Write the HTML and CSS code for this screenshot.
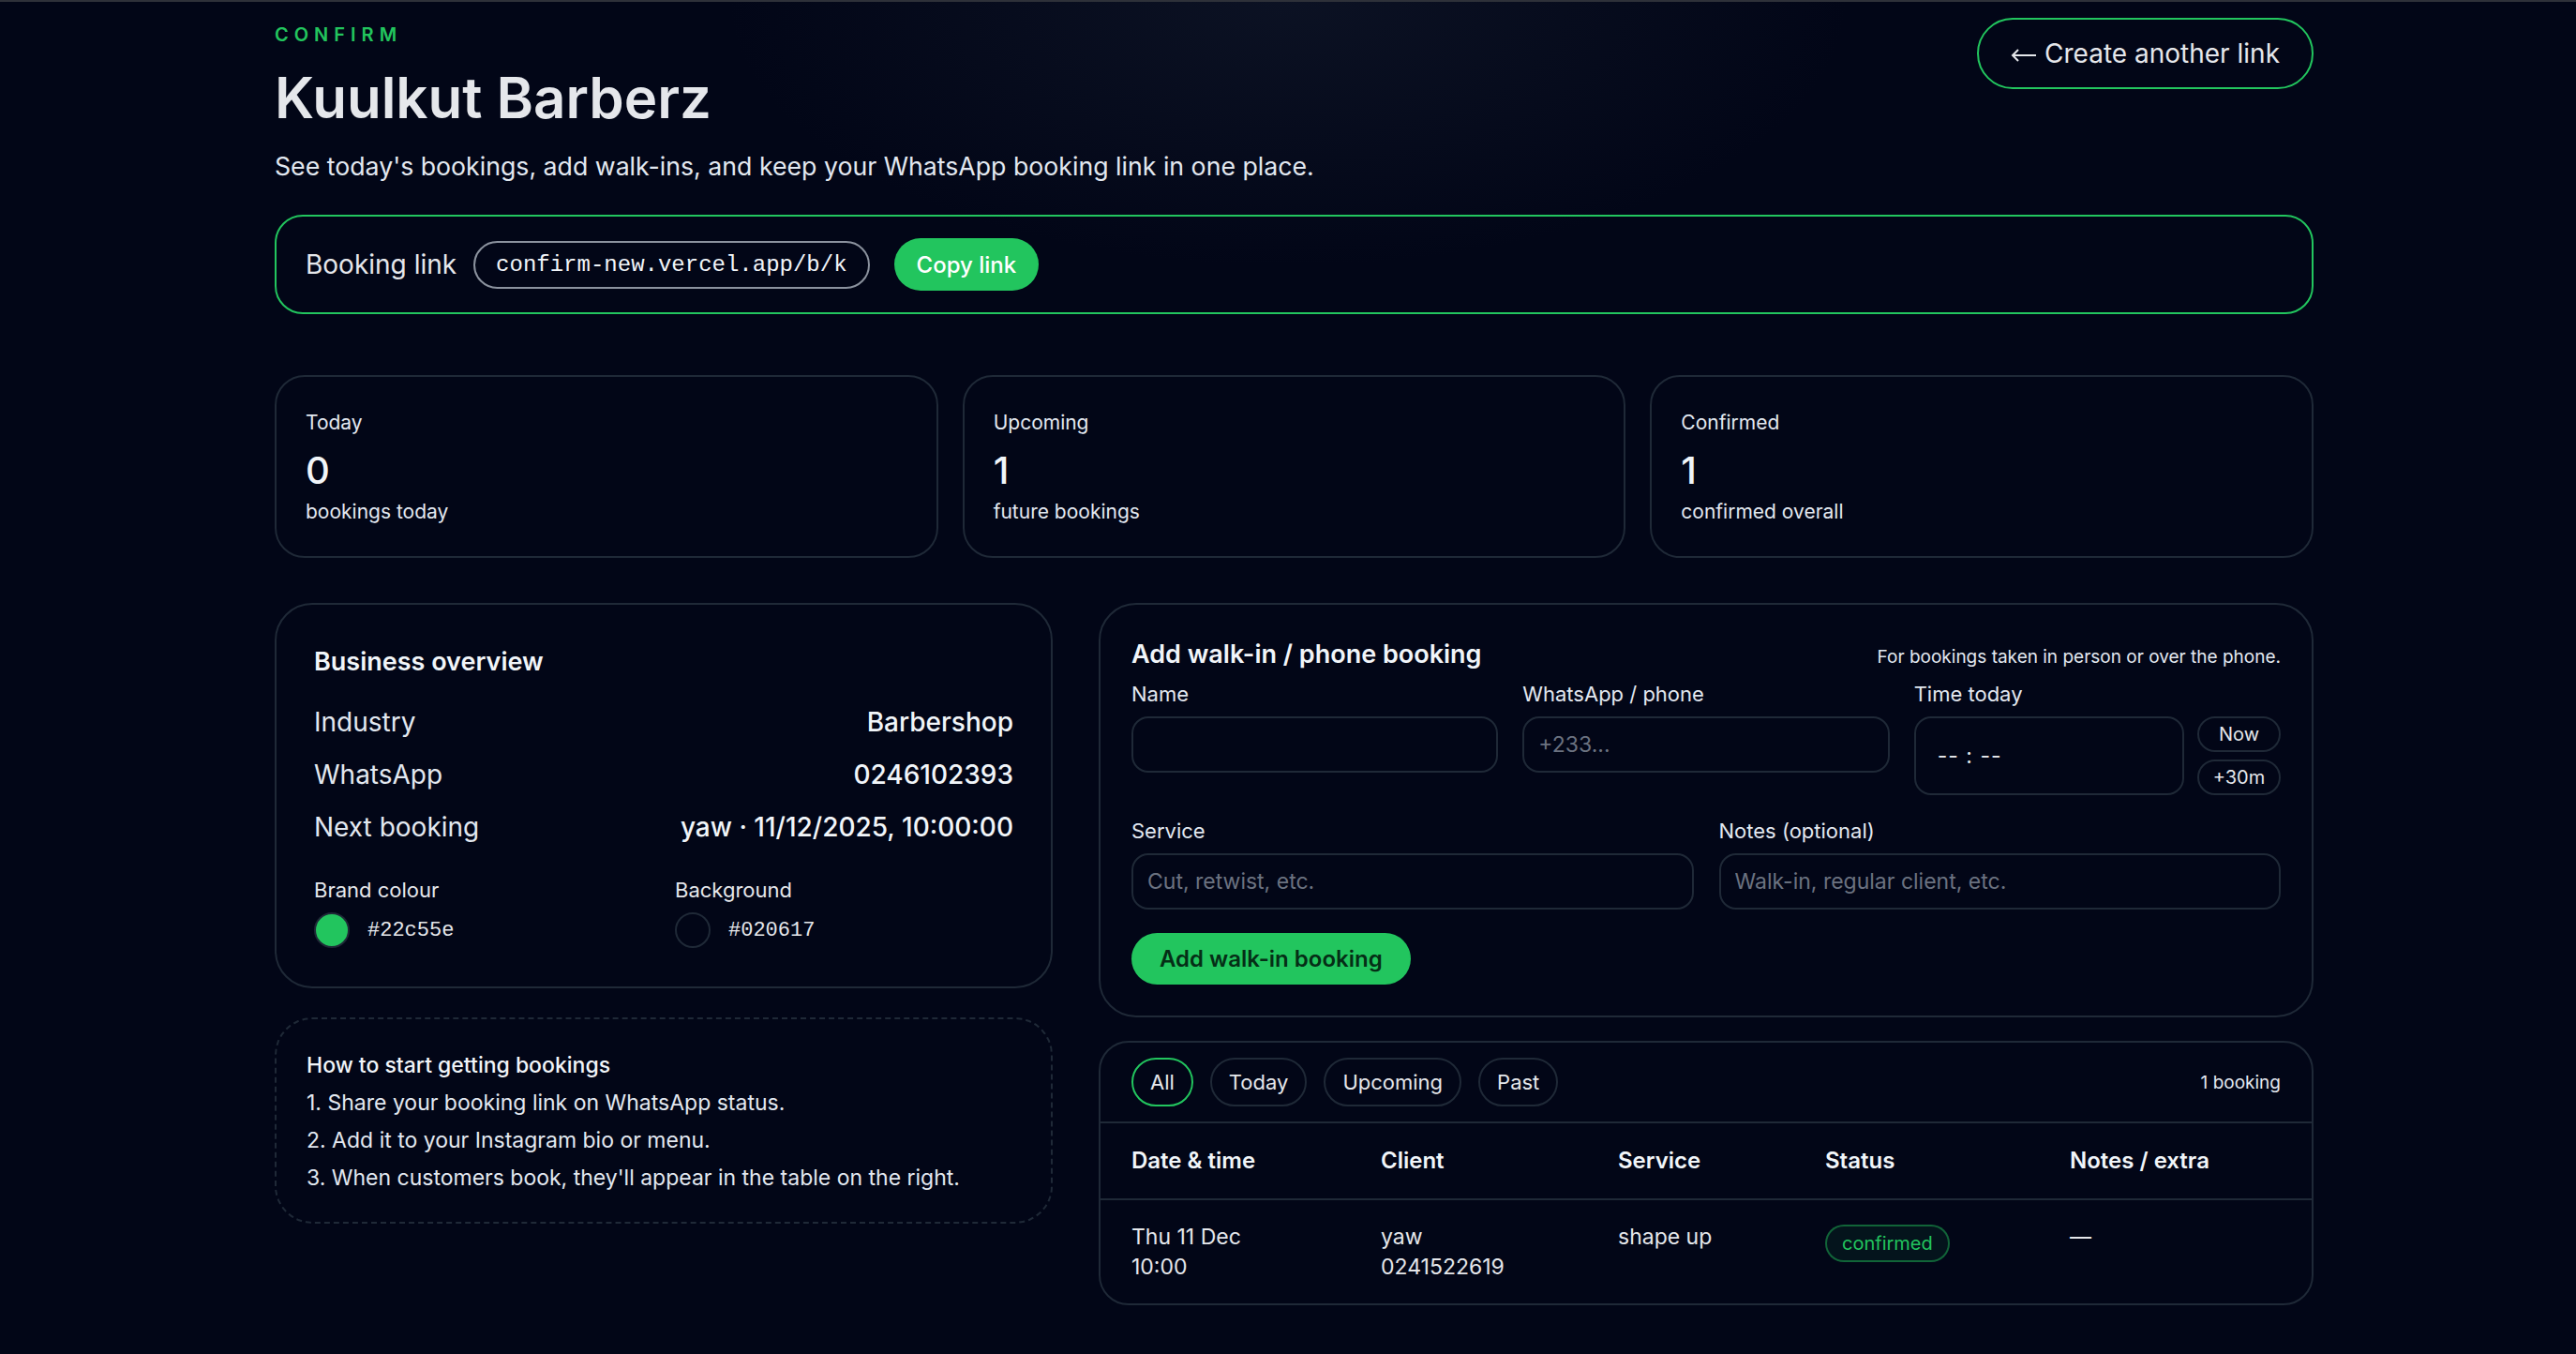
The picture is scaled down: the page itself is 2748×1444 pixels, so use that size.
FILE: index.html
```html
<!DOCTYPE html>
<html>

<head>
  <title>Confirm - Kuulkut Barberz</title>
  <link rel="stylesheet" href="styles.css">
</head>

<body>
  <main class="page">
    <header class="top">
      <div>
        <p class="brand">CONFIRM</p>
        <h1>Kuulkut Barberz</h1>
        <p class="lead">See today's bookings, add walk-ins, and keep your WhatsApp booking link in one place.</p>
      </div>
      <a class="ghost-btn" href="#">
        <svg class="arrow" width="28" height="16" viewBox="0 0 28 16" fill="none" stroke="currentColor" stroke-width="2">
          <path d="M27 8H2M8 2L2 8l6 6" />
        </svg>
        Create another link
      </a>
    </header>

    <section class="link-card">
      <span class="link-label">Booking link</span>
      <code class="link-pill">confirm-new.vercel.app/b/k</code>
      <button class="copy-btn">Copy link</button>
    </section>

    <section class="stats">
      <div class="stat">
        <p class="stat-label">Today</p>
        <p class="stat-num">0</p>
        <p class="stat-sub">bookings today</p>
      </div>
      <div class="stat">
        <p class="stat-label">Upcoming</p>
        <p class="stat-num">1</p>
        <p class="stat-sub">future bookings</p>
      </div>
      <div class="stat">
        <p class="stat-label">Confirmed</p>
        <p class="stat-num">1</p>
        <p class="stat-sub">confirmed overall</p>
      </div>
    </section>

    <section class="main-grid">
      <div class="col col-left">
        <div class="card overview">
          <h2 class="card-title">Business overview</h2>
          <div class="rows">
            <div class="row"><span>Industry</span><span class="val">Barbershop</span></div>
            <div class="row"><span>WhatsApp</span><span class="val">0246102393</span></div>
            <div class="row"><span>Next booking</span><span class="val">yaw · 11/12/2025, 10:00:00</span></div>
          </div>
          <div class="swatches">
            <div>
              <p class="sw-label">Brand colour</p>
              <div class="sw-row"><span class="dot dot-brand"></span><code class="hex">#22c55e</code></div>
            </div>
            <div>
              <p class="sw-label">Background</p>
              <div class="sw-row"><span class="dot dot-bg"></span><code class="hex">#020617</code></div>
            </div>
          </div>
        </div>

        <div class="tips">
          <p class="tips-title">How to start getting bookings</p>
          <p>1. Share your booking link on WhatsApp status.</p>
          <p>2. Add it to your Instagram bio or menu.</p>
          <p>3. When customers book, they'll appear in the table on the right.</p>
        </div>
      </div>

      <div class="col col-right">
        <form class="card walkin" action="" method="get">
          <div class="walk-head">
            <h2 class="card-title">Add walk-in / phone booking</h2>
            <span class="note">For bookings taken in person or over the phone.</span>
          </div>
          <div class="form-row three">
            <label class="field">
              <span class="field-label">Name</span>
              <input class="input" type="text" name="name">
            </label>
            <label class="field">
              <span class="field-label">WhatsApp / phone</span>
              <input class="input" type="text" name="phone" placeholder="+233...">
            </label>
            <div class="field">
              <span class="field-label">Time today</span>
              <div class="time-wrap">
                <div class="input time-box">-- : --</div>
                <div class="time-btns">
                  <button type="button" class="mini-btn">Now</button>
                  <button type="button" class="mini-btn">+30m</button>
                </div>
              </div>
            </div>
          </div>
          <div class="form-row two">
            <label class="field">
              <span class="field-label">Service</span>
              <input class="input" type="text" name="service" placeholder="Cut, retwist, etc.">
            </label>
            <label class="field">
              <span class="field-label">Notes (optional)</span>
              <input class="input" type="text" name="notes" placeholder="Walk-in, regular client, etc.">
            </label>
          </div>
          <button type="submit" class="add-btn">Add walk-in booking</button>
        </form>

        <div class="card bookings">
          <div class="filter-bar">
            <div class="filters">
              <button class="pill active">All</button>
              <button class="pill">Today</button>
              <button class="pill">Upcoming</button>
              <button class="pill">Past</button>
            </div>
            <span class="count">1 booking</span>
          </div>
          <table class="table">
            <colgroup>
              <col style="width: 299px">
              <col style="width: 253px">
              <col style="width: 221px">
              <col style="width: 261px">
              <col>
            </colgroup>
            <thead>
              <tr>
                <th>Date &amp; time</th>
                <th>Client</th>
                <th>Service</th>
                <th>Status</th>
                <th>Notes / extra</th>
              </tr>
            </thead>
            <tbody>
              <tr>
                <td>Thu 11 Dec<br>10:00</td>
                <td>yaw<br>0241522619</td>
                <td>shape up</td>
                <td><span class="badge">confirmed</span></td>
                <td>—</td>
              </tr>
            </tbody>
          </table>
        </div>
      </div>
    </section>
  </main>
</body>

</html>
```

FILE: styles.css
```css
body {
  margin: 0;
  min-height: 1442px;
  border-top: 2px solid #2e3139;
  font-family: Inter, "Noto Sans", sans-serif;
  color: #e5e7eb;
  background: radial-gradient(ellipse 800px 380px at 50% 0%, rgba(51, 65, 85, 0.2), transparent 75%), #020617;
}

p {
  margin: 0;
}

.page {
  padding: 17px 280px 40px 293px;
}

.top {
  display: flex;
  justify-content: space-between;
  align-items: flex-start;
}

.brand {
  margin-top: 4px;
  font-size: 20px;
  line-height: 28px;
  letter-spacing: 6px;
  font-weight: 600;
  color: #22c55e;
}

h1 {
  margin: 17px 0 0;
  font-size: 60px;
  line-height: 72px;
  font-weight: 600;
  color: #e5e7eb;
}

.lead {
  margin-top: 19px;
  font-size: 26.7px;
  line-height: 36px;
  color: #e2e8f0;
}

.ghost-btn {
  display: flex;
  align-items: center;
  gap: 8px;
  height: 76px;
  box-sizing: border-box;
  padding: 0 34px;
  border: 2px solid #22c55e;
  border-radius: 999px;
  font-size: 28px;
  color: #e5e7eb;
  text-decoration: none;
}

.arrow {
  margin-top: 3px;
}

/* booking link */
.link-card {
  display: flex;
  align-items: center;
  gap: 18px;
  margin-top: 34px;
  height: 106px;
  box-sizing: border-box;
  padding: 0 31px;
  border: 2px solid #22c55e;
  border-radius: 30px;
}

.link-label {
  font-size: 28px;
}

.link-pill {
  display: flex;
  align-items: center;
  height: 51px;
  box-sizing: border-box;
  padding: 0 22px;
  border: 2px solid #8b929e;
  border-radius: 999px;
  font-family: "Liberation Mono", "DejaVu Sans Mono", monospace;
  font-size: 24px;
  color: #f1f5f9;
}

.copy-btn {
  margin-left: 8px;
  height: 56px;
  padding: 0 24px;
  border: 0;
  border-radius: 999px;
  background: #22c55e;
  color: #fff;
  font-family: inherit;
  font-size: 24px;
  font-weight: 500;
}

/* stats */
.stats {
  display: grid;
  grid-template-columns: repeat(3, 1fr);
  gap: 26px;
  margin-top: 65px;
}

.stat {
  height: 195px;
  box-sizing: border-box;
  padding: 34px 31px 31px;
  border: 2px solid #1f2937;
  border-radius: 32px;
}

.stat-label,
.stat-sub {
  font-size: 21px;
  line-height: 30px;
  color: #e2e8f0;
}

.stat-num {
  margin: 12px 0 5px;
  font-size: 40px;
  line-height: 48px;
  font-weight: 500;
  color: #f1f5f9;
}

/* lower grid */
.main-grid {
  display: grid;
  grid-template-columns: 830px minmax(0, 1fr);
  gap: 49px;
  align-items: start;
  margin-top: 48px;
}

.col {
  display: flex;
  flex-direction: column;
}

.col-left {
  gap: 31px;
}

.col-right {
  gap: 25px;
}

.card {
  border: 2px solid #1f2937;
  border-radius: 40px;
}

.card-title {
  margin: 0;
  font-size: 27px;
  line-height: 36px;
  font-weight: 600;
  color: #f1f5f9;
}

.overview {
  padding: 43px 40px 41px;
}

.rows {
  display: flex;
  flex-direction: column;
  gap: 16px;
  margin-top: 26px;
}

.row {
  display: flex;
  justify-content: space-between;
  font-size: 28px;
  line-height: 40px;
  color: #e2e8f0;
}

.row .val {
  font-weight: 500;
  color: #f1f5f9;
}

.swatches {
  display: grid;
  grid-template-columns: 1fr 1fr;
  gap: 24px;
  margin-top: 32px;
}

.sw-label {
  font-size: 22px;
  line-height: 30px;
}

.sw-row {
  display: flex;
  align-items: center;
  gap: 19px;
  margin-top: 9px;
}

.dot {
  width: 38px;
  height: 38px;
  box-sizing: border-box;
  border: 2px solid #1f2937;
  border-radius: 50%;
}

.dot-brand {
  background: #22c55e;
}

.dot-bg {
  background: #020617;
}

.hex {
  font-family: "Liberation Mono", "DejaVu Sans Mono", monospace;
  font-size: 22px;
  color: #e5e7eb;
}

.tips {
  padding: 29px 32px 27px;
  border: 2px dashed #1f2937;
  border-radius: 40px;
  font-size: 23px;
  line-height: 40px;
  color: #e2e8f0;
}

.tips-title {
  font-weight: 500;
  color: #f1f5f9;
}

/* walk-in form */
.walkin {
  margin: 0;
  padding: 35px 33px 33px;
}

.walk-head {
  display: flex;
  justify-content: space-between;
  align-items: baseline;
}

.note {
  font-size: 19px;
  color: #e2e8f0;
}

.form-row {
  display: grid;
  align-items: start;
}

.form-row.three {
  grid-template-columns: repeat(3, minmax(0, 1fr));
  gap: 26px;
  margin-top: 9px;
}

.form-row.two {
  grid-template-columns: repeat(2, minmax(0, 1fr));
  gap: 27px;
  margin-top: 23px;
}

.field {
  display: flex;
  flex-direction: column;
  min-width: 0;
}

.field-label {
  margin-bottom: 9px;
  font-size: 22px;
  line-height: 30px;
  color: #e2e8f0;
}

.input {
  width: 100%;
  min-width: 0;
  height: 60px;
  box-sizing: border-box;
  padding: 0 15px;
  border: 2px solid #1f2937;
  border-radius: 18px;
  background: transparent;
  color: #e5e7eb;
  font-family: inherit;
  font-size: 23px;
  outline: none;
}

.input::placeholder {
  color: #6b7280;
}

.time-wrap {
  display: flex;
  gap: 14px;
}

.time-box {
  flex: 1;
  height: 84px;
  display: flex;
  align-items: center;
  padding: 0 23px;
  letter-spacing: 1px;
}

.time-btns {
  display: flex;
  flex-direction: column;
  gap: 8px;
}

.mini-btn {
  width: 89px;
  height: 38px;
  border: 2px solid #1f2937;
  border-radius: 999px;
  background: transparent;
  color: #e5e7eb;
  font-family: inherit;
  font-size: 20px;
}

.add-btn {
  margin-top: 25px;
  height: 55px;
  padding: 0 30px;
  border: 0;
  border-radius: 999px;
  background: #22c55e;
  color: #052e16;
  font-family: inherit;
  font-size: 24px;
  font-weight: 600;
}

/* bookings table */
.bookings {
  border-radius: 32px;
  overflow: hidden;
}

.filter-bar {
  display: flex;
  justify-content: space-between;
  align-items: center;
  padding: 16px 33px;
  border-bottom: 2px solid #1f2937;
}

.filters {
  display: flex;
  gap: 18px;
}

.pill {
  height: 52px;
  padding: 0 18px;
  border: 2px solid #1f2937;
  border-radius: 999px;
  background: transparent;
  color: #e5e7eb;
  font-family: inherit;
  font-size: 22px;
}

.pill.active {
  border-color: #22c55e;
}

.count {
  font-size: 19px;
  color: #e2e8f0;
}

.table {
  width: 100%;
  table-layout: fixed;
  border-collapse: collapse;
}

.table th {
  padding: 24px 0;
  border-bottom: 2px solid #1f2937;
  text-align: left;
  font-size: 24px;
  line-height: 32px;
  font-weight: 600;
  color: #f1f5f9;
}

.table td {
  padding: 23px 0;
  vertical-align: top;
  font-size: 23px;
  line-height: 32px;
  color: #e5e7eb;
}

.table th:first-child,
.table td:first-child {
  padding-left: 33px;
}

.badge {
  display: inline-block;
  margin-top: 3px;
  padding: 0 16px;
  border: 2px solid rgba(34, 197, 94, 0.45);
  border-radius: 999px;
  background: rgba(34, 197, 94, 0.08);
  color: #22c55e;
  font-size: 20px;
  line-height: 36px;
}
```
